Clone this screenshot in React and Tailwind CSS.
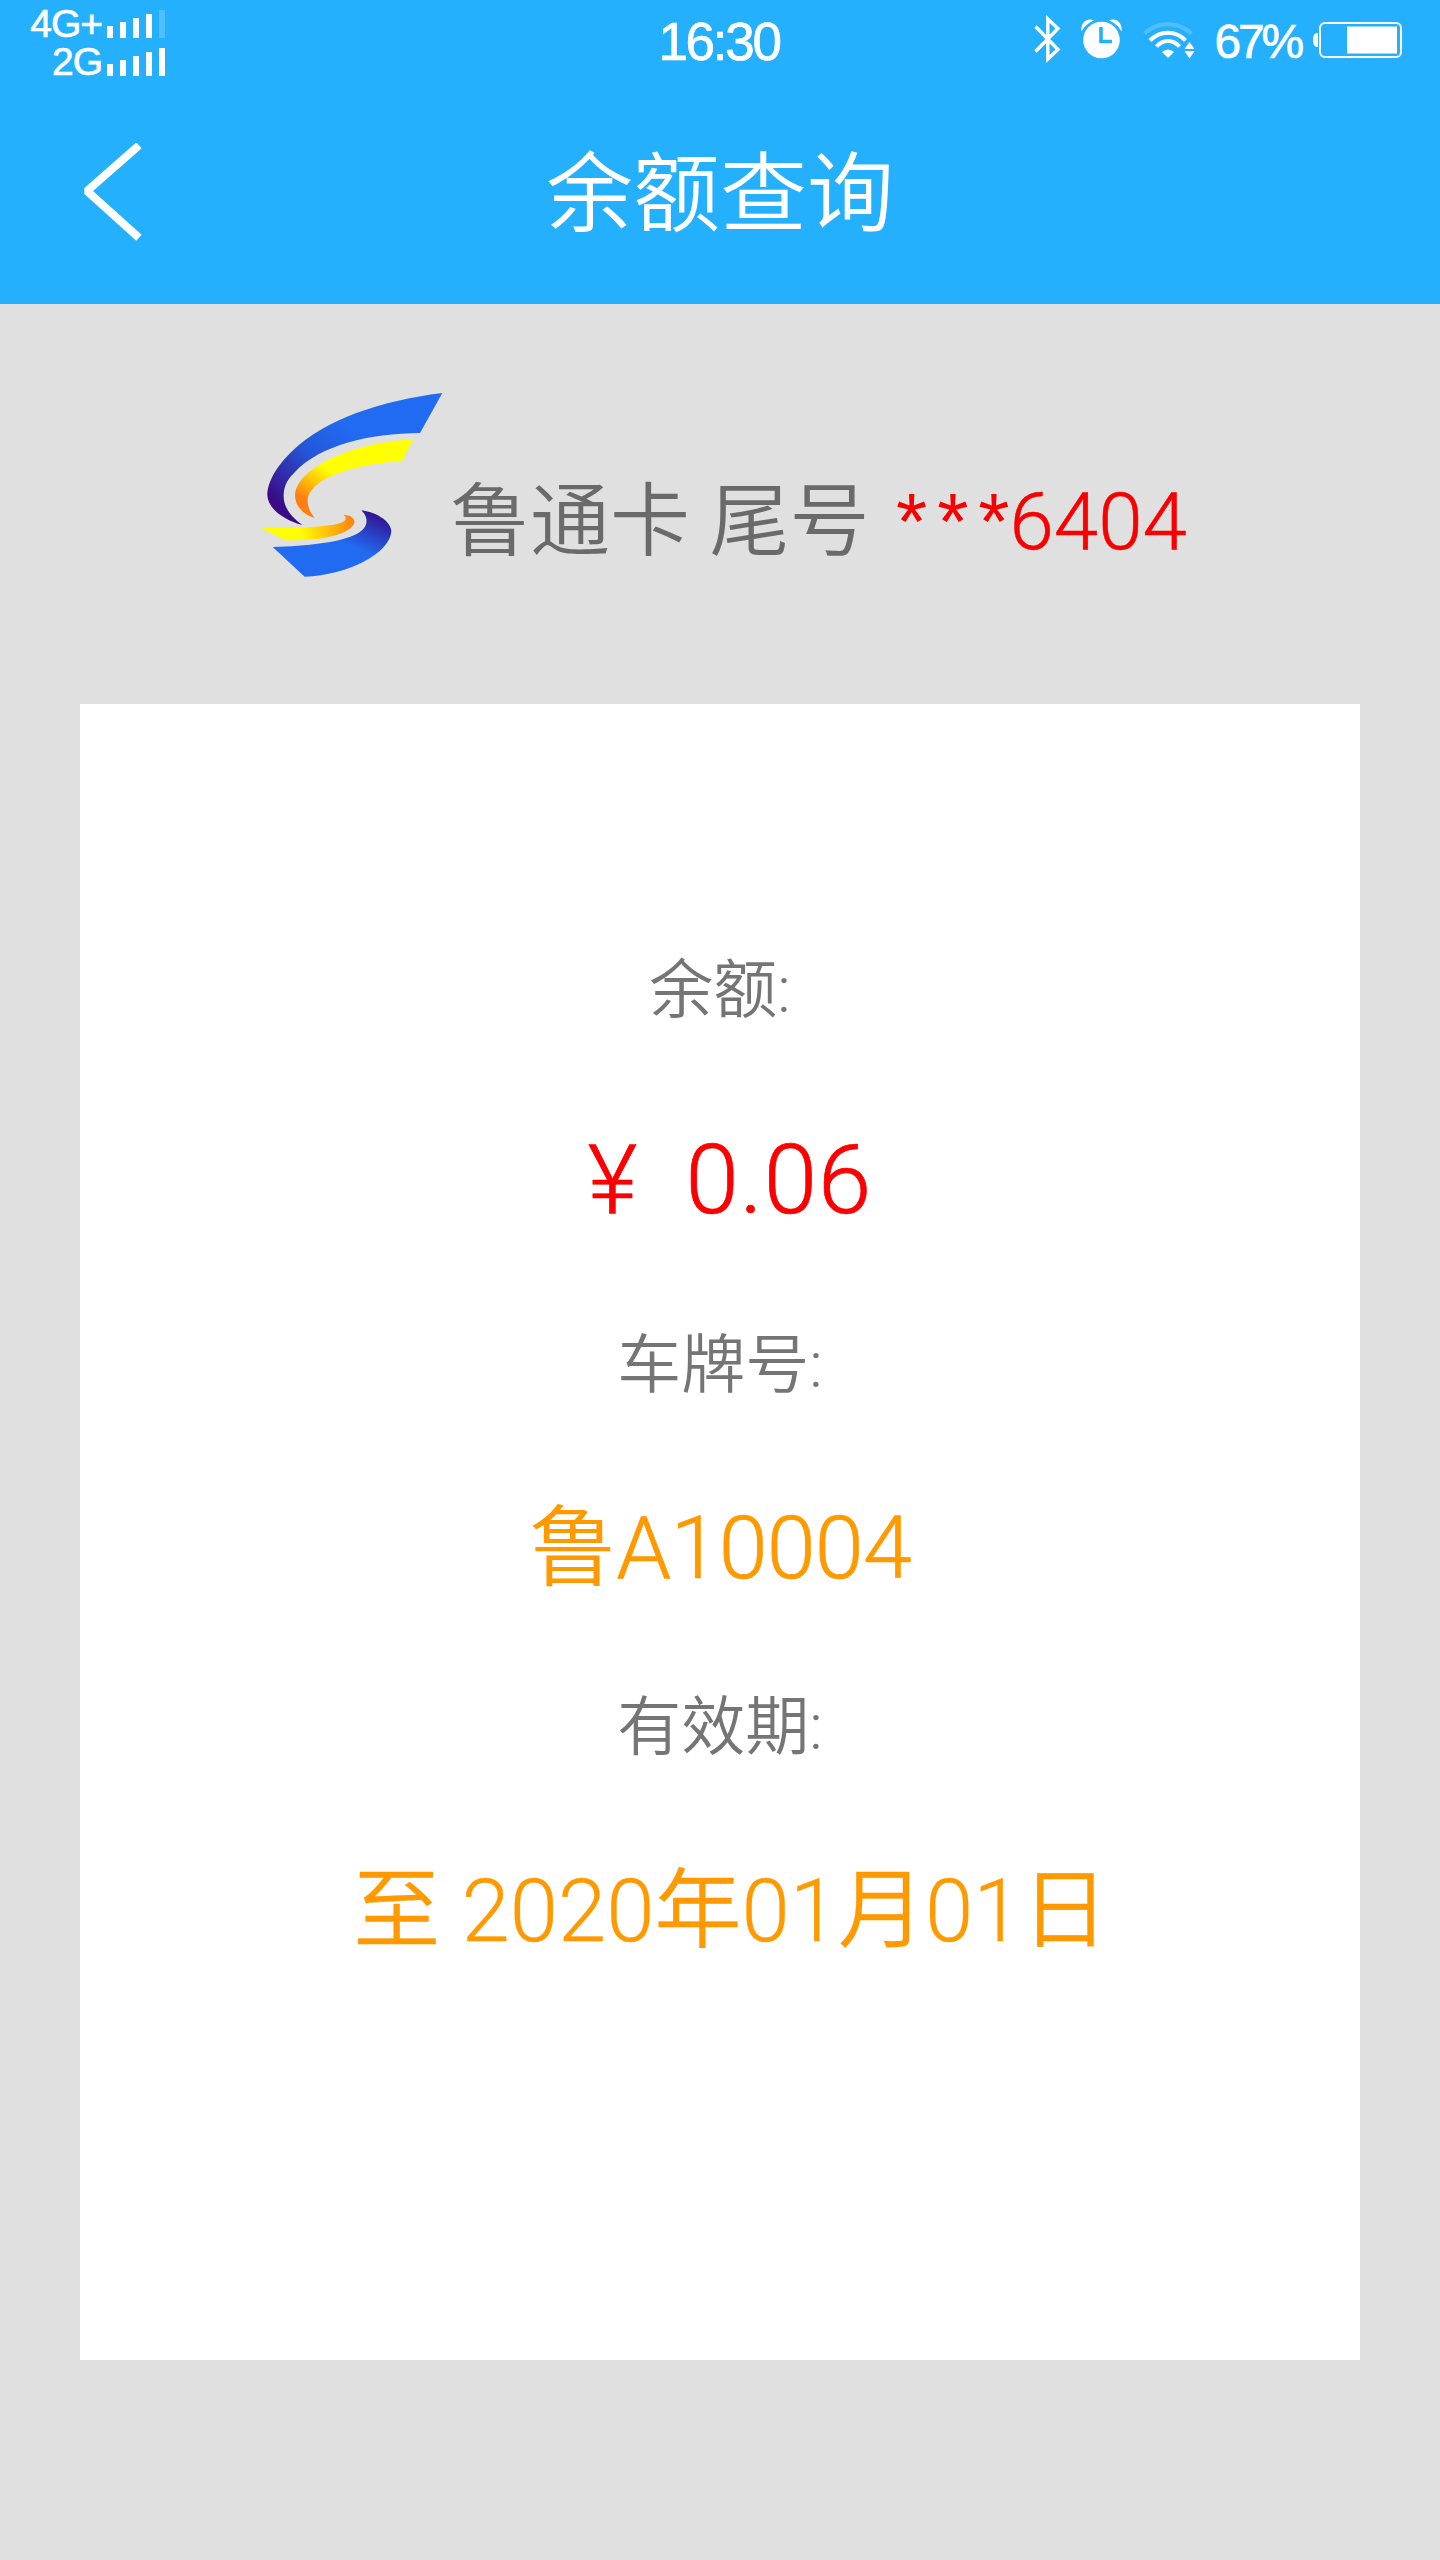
const card = {
  tail: "6404",
  balance: "0.06",
};

function Signal({ label, bars }) {
  return (
    <div className="flex h-[38px] items-end justify-end">
      <span className="mr-[5px] -mb-[5px] text-[39px] leading-[38px] tracking-[-1px] [-webkit-text-stroke:0.7px]">{label}</span>
      <svg width="59" height="28" viewBox="0 0 59 28" fill="#fff">
        <rect x="0" y="16" width="6" height="12" />
        <rect x="13" y="12" width="6" height="16" />
        <rect x="26" y="8" width="6" height="20" />
        <rect x="39" y="4" width="6" height="24" />
        <rect x="52" y="0" width="6" height="28" opacity={bars === 5 ? 1 : 0.2} />
      </svg>
    </div>
  );
}

function Bluetooth() {
  return (
    <svg width="28" height="50" viewBox="0 0 28 50" fill="none" stroke="#fff" strokeWidth="3.4">
      <path d="M1.5 12.5 L24 35.5 L13.8 45 V5 L24 14.5 L1.5 37.5" />
    </svg>
  );
}

function Alarm() {
  return (
    <svg width="42" height="40" viewBox="0 0 42 40" fill="#fff">
      <path d="M0.5 12.5 C-1 3 7 -2 13 1.5 C8 3.5 3 7.5 0.5 12.5Z" />
      <path d="M40.5 12.5 C42 3 34 -2 28 1.5 C33 3.5 38 7.5 40.5 12.5Z" />
      <circle cx="20.5" cy="21" r="18.3" />
      <path d="M20 8 V22.5 H31" fill="none" stroke="#24b0fd" strokeWidth="3.6" />
    </svg>
  );
}

function Wifi() {
  return (
    <svg width="52" height="38" viewBox="0 0 52 38" fill="none" stroke="#fff" strokeWidth="4">
      <path d="M1.5 11.5 C14 -1 35 -1 48.5 11.5" opacity=".2" />
      <path d="M7 18.5 C17 8 33 8 42.5 18.5" />
      <path d="M13.5 24.5 C20 17 30 17 36.5 24.5" />
      <path d="M19 30 Q25 25 31 30 L25 36Z" fill="#fff" stroke="none" />
      <path d="M46.5 20 L51.5 27 H41.5Z M46.5 36.5 L51.5 29 H41.5Z" fill="#fff" stroke="none" />
    </svg>
  );
}

function Battery() {
  return (
    <svg width="89" height="36" viewBox="0 0 89 36" fill="none">
      <path d="M5 11 H4 Q0 11 0 18 Q0 25 4 25 H5Z" fill="#fff" />
      <rect x="7" y="1" width="81" height="34" rx="5" stroke="#fff" strokeWidth="2" />
      <rect x="34" y="4.5" width="50" height="27" fill="#fff" />
    </svg>
  );
}

function Logo() {
  return (
    <svg width="185" height="190" viewBox="60 60 555 570">
      <defs>
        <linearGradient id="top" gradientUnits="userSpaceOnUse" x1="330" y1="170" x2="110" y2="400">
          <stop offset="0" stopColor="#216bf3" />
          <stop offset=".45" stopColor="#2457d8" />
          <stop offset="1" stopColor="#3b0a86" />
        </linearGradient>
        <linearGradient id="inner" gradientUnits="userSpaceOnUse" x1="250" y1="290" x2="185" y2="385">
          <stop offset="0" stopColor="#ffff00" />
          <stop offset="1" stopColor="#ff7f0e" />
        </linearGradient>
        <linearGradient id="tip" gradientUnits="userSpaceOnUse" x1="180" y1="490" x2="335" y2="450">
          <stop offset="0" stopColor="#ffff00" />
          <stop offset="1" stopColor="#ff8412" />
        </linearGradient>
        <linearGradient id="bottom" gradientUnits="userSpaceOnUse" x1="400" y1="425" x2="350" y2="535">
          <stop offset="0" stopColor="#32128f" />
          <stop offset="1" stopColor="#216bf3" />
        </linearGradient>
      </defs>
      <path d="M607 69 C420 92 255 150 160 240 C105 292 82 340 82 375 C83 415 130 450 187 465 C145 435 130 405 131 375 C132 345 145 325 165 306 C240 225 390 190 540 189Z" fill="url(#top)" />
      <path d="M520 207 C400 216 290 245 215 300 C180 328 165 352 165 378 C166 408 190 435 224 444 C205 420 201 402 204 382 C212 350 250 325 310 304 C370 286 430 276 486 274Z" fill="url(#inner)" />
      <path d="M62 473 C155 476 250 471 295 461 C317 455 323 446 311 434 C330 434 344 445 344 457 C332 497 230 514 135 511Z" fill="url(#tip)" />
      <path d="M98 531 C200 528 300 518 350 492 C388 472 386 443 364 421 C415 428 454 457 454 485 C448 550 325 615 194 620Z" fill="url(#bottom)" />
    </svg>
  );
}

function StatusBar() {
  return (
    <div className="grid h-20 grid-cols-[1fr_auto_1fr] text-white">
      <div className="w-[166px]">
        <Signal label="4G+" bars={4} />
        <Signal label="2G" bars={5} />
      </div>
      <p className="-ml-[2px] pt-[14px] text-[53px] leading-[56px] tracking-[-2.3px] [-webkit-text-stroke:0.7px]">16:30</p>
      <div className="flex items-center justify-end pr-[38px] pb-[2px]">
        <Bluetooth />
        <div className="ml-[19px]">
          <Alarm />
        </div>
        <div className="mt-[3px] ml-[20px]">
          <Wifi />
        </div>
        <span className="mt-[5px] ml-[20px] text-[48px] leading-[48px] tracking-[-3.2px] [-webkit-text-stroke:0.7px]">67%</span>
        <div className="mt-[1px] ml-[12px]">
          <Battery />
        </div>
      </div>
    </div>
  );
}

export default function App() {
  return (
    <div className="flex h-[2560px] w-[1440px] flex-col bg-[#e0e0e0] font-['Liberation_Sans','Noto_Sans_CJK_SC',sans-serif]">
      {/* Header */}
      <header className="h-[304px] bg-[#24b0fd]">
        <StatusBar />
        <div className="grid h-[224px] grid-cols-[200px_1fr_200px] items-center pb-3">
          <svg width="62" height="98" viewBox="0 0 62 98" fill="none" stroke="#fff" strokeWidth="8" className="mt-[12px] ml-[80px]">
            <path d="M56 5 L7 48 L56 92" strokeLinejoin="bevel" strokeLinecap="square" />
          </svg>
          <h1 className="mt-[2px] text-center font-['Noto_Sans_CJK_SC',sans-serif] text-[87px] leading-[100px] font-[350] text-white">
            余额查询
          </h1>
        </div>
      </header>

      {/* Card name */}
      <div className="flex h-[400px] items-start pt-[86px] pl-[260px]">
        <Logo />
        <p className="mt-[72px] ml-[5px] font-['Roboto','Noto_Sans_CJK_SC',sans-serif] text-[80px] leading-[120px] font-[350] whitespace-nowrap text-[#6a6a6a]">
          鲁通卡 尾号{" "}
          <span className="text-[#f80000] [-webkit-text-stroke:0.5px]">
            <span className="mr-[-10px] ml-[7px] font-['Liberation_Sans',sans-serif] tracking-[10px] [-webkit-text-stroke:0px]">***</span>
            {card.tail}
          </span>
        </p>
      </div>

      {/* Balance details */}
      <main className="mx-20 flex h-[1656px] flex-col items-center bg-white pt-[235px] font-['Roboto','Noto_Sans_CJK_SC',sans-serif] font-[350]">
        <p className="h-[181px] text-[64px] leading-[104px] text-[#757575]">余额:</p>
        <p className="flex h-[194px] gap-[48px] pl-[20px] text-[96px] leading-[120px] text-[#fa0000] [-webkit-text-stroke:0.7px]">
          <span>¥</span>
          <span className="tracking-[1px]">{card.balance}</span>
        </p>
        <p className="h-[174px] text-[64px] leading-[104px] text-[#757575]">车牌号:</p>
        <p className="h-[188px] text-[88px] leading-[120px] tracking-[-0.7px] text-[#ff9900]">
          鲁<span className="[-webkit-text-stroke:0.6px]">A10004</span>
        </p>
        <p className="h-[175px] text-[64px] leading-[104px] text-[#757575]">有效期:</p>
        <p className="pl-[22px] text-[87px] leading-[120px] text-[#ff9900] [-webkit-text-stroke:0.3px]">至 2020年01月01日</p>
      </main>
    </div>
  );
}
